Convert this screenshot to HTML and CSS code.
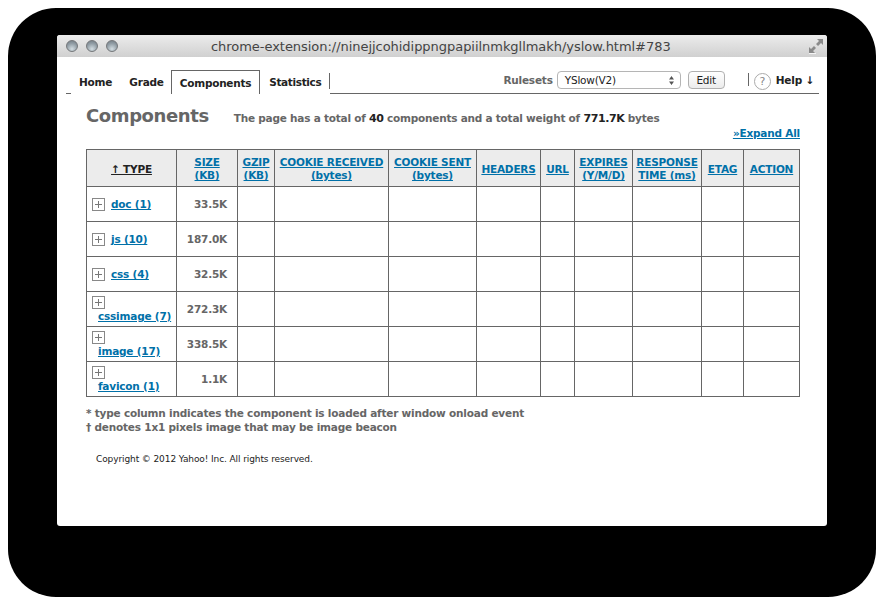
FILE: index.html
```html
<!DOCTYPE html>
<html lang="en">
<head>
<meta charset="utf-8">
<title>YSlow</title>
<link rel="stylesheet" href="styles.css">
</head>
<body>
<div class="shadow">
  <div class="window">
    <header class="titlebar">
      <div class="lights"><i class="light"></i><i class="light"></i><i class="light"></i></div>
      <div class="title">chrome-extension://ninejjcohidippngpapiilnmkgllmakh/yslow.html#783</div>
      <svg class="expand" width="16" height="16" viewBox="0 0 16 16"><path d="M9 0h6v6l-2-2-3 3-2-2 3-3zM1 8l2 2 3-3 2 2-3 3 2 2H1z" fill="#8a8a8a"/><path d="M1 14h7v1H1z" fill="#f4f4f4"/></svg>
    </header>
    <nav class="toolbar">
      <div class="tabs">
        <span class="tab">Home</span>
        <span class="tab">Grade</span>
        <span class="tab active">Components</span>
        <span class="tab last">Statistics</span>
      </div>
      <div class="tools">
        <span class="ruleset-label">Rulesets</span>
        <div class="select">YSlow(V2)<svg width="7" height="11" viewBox="0 0 7 11"><path d="M3.500 1 6 4.500H1zM3.500 10 1 6.500h5z" fill="#555"/></svg></div>
        <div class="btn">Edit</div>
        <span class="divider"></span>
        <span class="help-icon">?</span>
        <span class="help">Help ↓</span>
      </div>
    </nav>
    <main class="content">
      <div class="heading">
        <h1>Components</h1>
        <p class="summary">The page has a total of <b>40</b> components and a total weight of <b>771.7K</b> bytes</p>
      </div>
      <div class="expand-all"><a href="#">»Expand All</a></div>
      <table class="grid">
        <colgroup>
          <col class="c1"><col class="c2"><col class="c3"><col class="c4"><col class="c5"><col class="c6"><col class="c7"><col class="c8"><col class="c9"><col class="c10"><col class="c11">
        </colgroup>
        <thead>
          <tr>
            <th class="sorted"><a href="#">↑ TYPE</a></th>
            <th><a href="#">SIZE<br>(KB)</a></th>
            <th><a href="#">GZIP<br>(KB)</a></th>
            <th><a href="#">COOKIE RECEIVED<br>(bytes)</a></th>
            <th><a href="#">COOKIE SENT<br>(bytes)</a></th>
            <th><a href="#">HEADERS</a></th>
            <th><a href="#">URL</a></th>
            <th><a href="#">EXPIRES<br>(Y/M/D)</a></th>
            <th><a href="#">RESPONSE<br>TIME (ms)</a></th>
            <th><a href="#">ETAG</a></th>
            <th><a href="#">ACTION</a></th>
          </tr>
        </thead>
        <tbody>
          <tr><td class="type"><span class="plus"></span><a href="#">doc (1)</a></td><td class="size">33.5K</td><td></td><td></td><td></td><td></td><td></td><td></td><td></td><td></td><td></td></tr>
          <tr><td class="type"><span class="plus"></span><a href="#">js (10)</a></td><td class="size">187.0K</td><td></td><td></td><td></td><td></td><td></td><td></td><td></td><td></td><td></td></tr>
          <tr><td class="type"><span class="plus"></span><a href="#">css (4)</a></td><td class="size">32.5K</td><td></td><td></td><td></td><td></td><td></td><td></td><td></td><td></td><td></td></tr>
          <tr><td class="type wrap"><span class="plus"></span><a href="#">cssimage (7)</a></td><td class="size">272.3K</td><td></td><td></td><td></td><td></td><td></td><td></td><td></td><td></td><td></td></tr>
          <tr><td class="type wrap"><span class="plus"></span><a href="#">image (17)</a></td><td class="size">338.5K</td><td></td><td></td><td></td><td></td><td></td><td></td><td></td><td></td><td></td></tr>
          <tr><td class="type wrap"><span class="plus"></span><a href="#">favicon (1)</a></td><td class="size">1.1K</td><td></td><td></td><td></td><td></td><td></td><td></td><td></td><td></td><td></td></tr>
        </tbody>
      </table>
      <div class="notes">
        <div>* type column indicates the component is loaded after window onload event</div>
        <div>† denotes 1x1 pixels image that may be image beacon</div>
      </div>
      <div class="copyright">Copyright © 2012 Yahoo! Inc. All rights reserved.</div>
    </main>
  </div>
</div>
</body>
</html>
```
FILE: styles.css
```css
* { box-sizing: border-box; }
html, body { margin: 0; padding: 0; background: #fff; }
body { width: 884px; height: 605px; overflow: hidden; font-family: "DejaVu Sans", sans-serif; }
.shadow { width: 868px; height: 589px; margin: 8px 0 0 8px; padding: 27px 49px 71px; background: #000; border-radius: 48px; }
.window { width: 770px; height: 491px; background: #fff; border-radius: 3px; overflow: hidden; }
.titlebar { height: 22px; display: flex; align-items: center; background: linear-gradient(#ececec, #d0d0d0); position: relative; padding-left: 9px; }
.lights { display: flex; gap: 8px; }
.light { width: 12px; height: 12px; border-radius: 50%; background: radial-gradient(circle at 50% 80%, #d3dde2, #8f9ba3 60%, #6f7a82 100%); border: 1px solid #74777a; }
.title { position: absolute; left: 154px; top: 3px; font-size: 13px; line-height: 17px; color: #444; white-space: nowrap; letter-spacing: -.04px; }
.expand { position: absolute; right: 3px; top: 4px; }
.toolbar { height: 37px; margin: 0 8px 0 9px; display: flex; justify-content: space-between; align-items: flex-end; border-bottom: 1px solid #666; }
.tabs { display: flex; height: 24px; margin: 0 0 -1px 5px; background: #fff; }
.tab { font-size: 10.500px; letter-spacing: -.2px; font-weight: bold; color: #222; line-height: 25px; padding: 0 7px 0 8px; white-space: nowrap; }
.tab:first-child { padding: 0 9px 0 8px; }
.tab.active { border: 1px solid #666; border-bottom: 0; padding: 0 8px; line-height: 24px; background: #fff; letter-spacing: -.25px; }
.tab.last { border-right: 1px solid #666; height: 16px; margin-top: 3px; padding: 0 8px 0 9px; line-height: 19px; letter-spacing: -.35px; }
.tools { display: flex; align-items: center; height: 20px; margin-bottom: 3px; font-size: 10.500px; letter-spacing: -.2px; font-weight: bold; color: #666; }
.ruleset-label { margin-right: 4px; }
.select { width: 124px; height: 18px; border: 1px solid #b5b5b5; border-radius: 4px; background: #fff; font-weight: normal; color: #222; line-height: 16px; padding: 0 5px 0 7px; display: flex; justify-content: space-between; align-items: center; }
.btn { width: 37px; height: 18px; margin-left: 7px; border: 1px solid #b0b0b0; border-radius: 4px; background: linear-gradient(#fff, #ececec); font-weight: normal; color: #222; text-align: center; line-height: 16px; }
.divider { width: 1px; height: 13px; background: #666; margin: 0 5px 2px 23px; }
.help-icon { width: 17px; height: 17px; border: 1px solid #aaa; border-radius: 50%; color: #888; text-align: center; line-height: 15px; font-weight: normal; font-size: 11px; margin: 2px 5px 0 0; }
.help { color: #222; margin-right: 5px; }
.content { padding: 0 27px 0 29px; }
.heading { display: flex; align-items: baseline; margin-top: 10px; height: 24px; }
h1 { margin: 0; font-size: 18px; letter-spacing: -.4px; line-height: 24px; font-weight: bold; color: #666; }
.summary { margin: 0 0 0 25px; font-size: 10.500px; letter-spacing: -.22px; font-weight: bold; color: #666; }
.summary b { color: #222; font-size: 11px; letter-spacing: -.4px; }
.expand-all { text-align: right; font-size: 10.500px; letter-spacing: -.2px; font-weight: bold; line-height: 14px; margin-top: -2px; height: 23px; }
a { color: #0070a8; }
.grid { table-layout: fixed; width: 714px; border-collapse: collapse; border: 1px solid #666; }
.c1 { width: 90px; } .c2 { width: 61px; } .c3 { width: 37px; } .c4 { width: 114px; } .c5 { width: 88px; } .c6 { width: 64px; } .c7 { width: 34px; } .c8 { width: 58px; } .c9 { width: 69px; } .c10 { width: 42px; } .c11 { width: 56px; }
th, td { border: 1px solid #666; padding: 0; }
thead tr { height: 37px; }
th { background: #ececec; padding-top: 2px; font-size: 10.500px; letter-spacing: -.2px; line-height: 13px; text-align: center; font-weight: bold; }
th.sorted a { color: #222; }
tbody tr { height: 35px; }
td { font-size: 10.500px; letter-spacing: -.2px; font-weight: bold; color: #666; }
.size { text-align: right; padding-right: 10px; }
.type { padding-left: 5px; white-space: nowrap; }
.type a { vertical-align: middle; }
.type.wrap { line-height: 13px; }
.type.wrap a { display: block; margin: 1px 0 0 6px; width: max-content; }
.plus { display: inline-block; vertical-align: middle; width: 13px; height: 13px; margin-right: 6px; border: 1px solid #888; background: linear-gradient(#777, #777) center/7px 1px no-repeat, linear-gradient(#777, #777) center/1px 7px no-repeat; }
.type.wrap .plus { display: block; }
.notes { margin-top: 9px; font-size: 10.500px; letter-spacing: -.2px; font-weight: bold; line-height: 14px; color: #666; }
.copyright { margin: 19px 0 0 10px; font-size: 9px; letter-spacing: -.1px; line-height: 12px; color: #222; }
```
